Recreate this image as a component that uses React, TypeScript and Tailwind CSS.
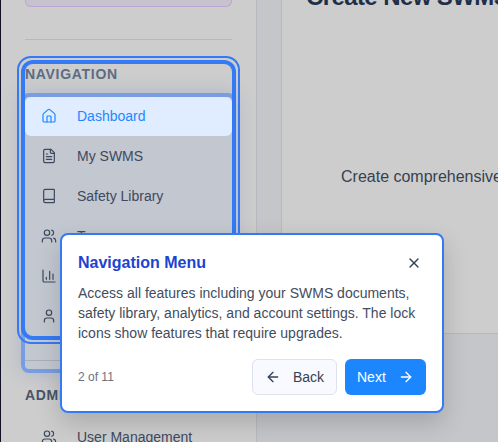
import React from "react";
import { ArrowLeft, ArrowRight, House, Users, User, X } from "lucide-react";

const stroke = {
  width: 16,
  height: 16,
  viewBox: "0 0 24 24",
  fill: "none",
  stroke: "currentColor",
  strokeWidth: 1.8,
  strokeLinecap: "round" as const,
  strokeLinejoin: "round" as const,
};

const FileIcon = () => (
  <svg {...stroke}>
    <path d="M15 2H6a2 2 0 0 0-2 2v16a2 2 0 0 0 2 2h12a2 2 0 0 0 2-2V7Z" />
    <path d="M14 2v4a2 2 0 0 0 2 2h4M10 9H8M16 13H8M16 17H8" />
  </svg>
);

const BookIcon = () => (
  <svg {...stroke}>
    <path d="M4 19.5v-15A2.5 2.5 0 0 1 6.500 2H19a1 1 0 0 1 1 1v18a1 1 0 0 1-1 1H6.500a1 1 0 0 1 0-5H20" />
  </svg>
);

const ChartIcon = () => (
  <svg {...stroke}>
    <path d="M3 3v16a2 2 0 0 0 2 2h16M8 17v-3M13 17V5M18 17V9" />
  </svg>
);

function NavItem({ icon, label, active = false }: { icon: React.ReactNode; label: string; active?: boolean }) {
  return (
    <div
      className={`flex shrink-0 items-center gap-5 rounded-md px-4 text-sm ${
        active ? "h-[39px] bg-[#e0ecff] pb-px text-[#1e88ff]" : "h-10 text-[#3d4960]"
      }`}
    >
      {icon}
      <span className="whitespace-nowrap">{label}</span>
    </div>
  );
}

export default function App() {
  return (
    <div className="relative flex h-[442px] w-[498px] overflow-hidden bg-[#c5c6ca] font-['Liberation_Sans',Arial,sans-serif]">
      <aside className="flex h-full w-[257px] shrink-0 flex-col border-r border-l border-r-[#b6b9c1] border-l-[#111126] bg-[#cdcdcd] pr-6 pl-6">
        <div className="h-[7px] shrink-0 rounded-b-md border border-t-0 border-[#b9a6d2] bg-[#c8c2ce]" />
        <div className="mt-8 h-px shrink-0 bg-[#b6b8c2]" />
        <div className="mt-6 flex h-8 shrink-0 items-start text-sm leading-5 font-bold tracking-[0.7px] text-[#5d6c82]">
          NAVIGATION
        </div>
        <div className="relative z-10 mt-px h-[272px] shrink-0 rounded-[4px] bg-[#c3c7cf] shadow-[0_0_0_4px_#789de3,0_0_20px_4px_rgba(59,100,180,0.22)]">
          <nav>
            <NavItem active icon={<House size={16} strokeWidth={1.8} />} label="Dashboard" />
            <NavItem icon={<FileIcon />} label="My SWMS" />
            <NavItem icon={<BookIcon />} label="Safety Library" />
            <NavItem icon={<Users size={16} strokeWidth={1.8} />} label="Team" />
            <NavItem icon={<ChartIcon />} label="Analytics" />
            <NavItem icon={<User size={16} strokeWidth={1.8} />} label="Account" />
          </nav>
          <div className="mt-6 h-px bg-[#aaaeb8]" />
        </div>
        <div className="mt-4 h-8 shrink-0 text-sm leading-5 font-bold tracking-[0.7px] text-[#475569]">ADMIN</div>
        <NavItem icon={<Users size={16} strokeWidth={1.8} />} label="User Management" />
      </aside>
      <main className="min-w-0 flex-1 overflow-hidden pl-6">
        <section className="h-[334px] w-[500px] border-b border-l border-[#b6b9c1] bg-[#cdcdcd]">
          <h1 className="h-[167px] pl-6 text-2xl leading-8 font-bold tracking-tight whitespace-nowrap text-[#1e2f49]">
            <span className="relative -top-[19px]">Create New SWMS</span>
          </h1>
          <p className="pl-[59px] text-base leading-5 whitespace-nowrap text-[#374151]">Create comprehensive Safe Work</p>
        </section>
      </main>

      <div className="absolute top-[64px] left-[25px] z-20 h-[272px] w-[207px] rounded-[8px] shadow-[0_0_0_4px_#347af5]" />
      <div className="absolute top-[56px] left-[17px] z-20 h-[288px] w-[223px] rounded-[14px] border-2 border-[#347af5]" />

      <div className="absolute top-[233px] left-[60px] z-30 flex h-[180px] w-[384px] flex-col rounded-lg border-2 border-[#347af5] bg-white p-4 shadow-[0_10px_25px_rgba(0,0,0,0.17)]">
        <div className="flex h-6 items-center justify-between pr-1">
          <h2 className="text-base font-bold text-[#1d43d0]">Navigation Menu</h2>
          <X size={16} className="text-[#334155]" />
        </div>
        <p className="mt-2 text-sm leading-5 whitespace-nowrap text-[#424d5f]">
          Access all features including your SWMS documents,
          <br />
          safety library, analytics, and account settings. The lock
          <br />
          icons show features that require upgrades.
        </p>
        <div className="mt-4 flex h-9 items-center gap-2">
          <span className="mr-auto text-xs text-[#6b7280]">2 of 11</span>
          <button className="flex h-9 w-[85px] items-center justify-between rounded-md border border-[#dce3ed] bg-[#f8faff] px-3 text-sm text-[#334155]">
            <ArrowLeft size={16} />
            Back
          </button>
          <button className="flex h-9 w-[81px] items-center justify-between rounded-md bg-[#1c86ff] px-3 text-sm text-white">
            Next
            <ArrowRight size={16} />
          </button>
        </div>
      </div>
    </div>
  );
}
